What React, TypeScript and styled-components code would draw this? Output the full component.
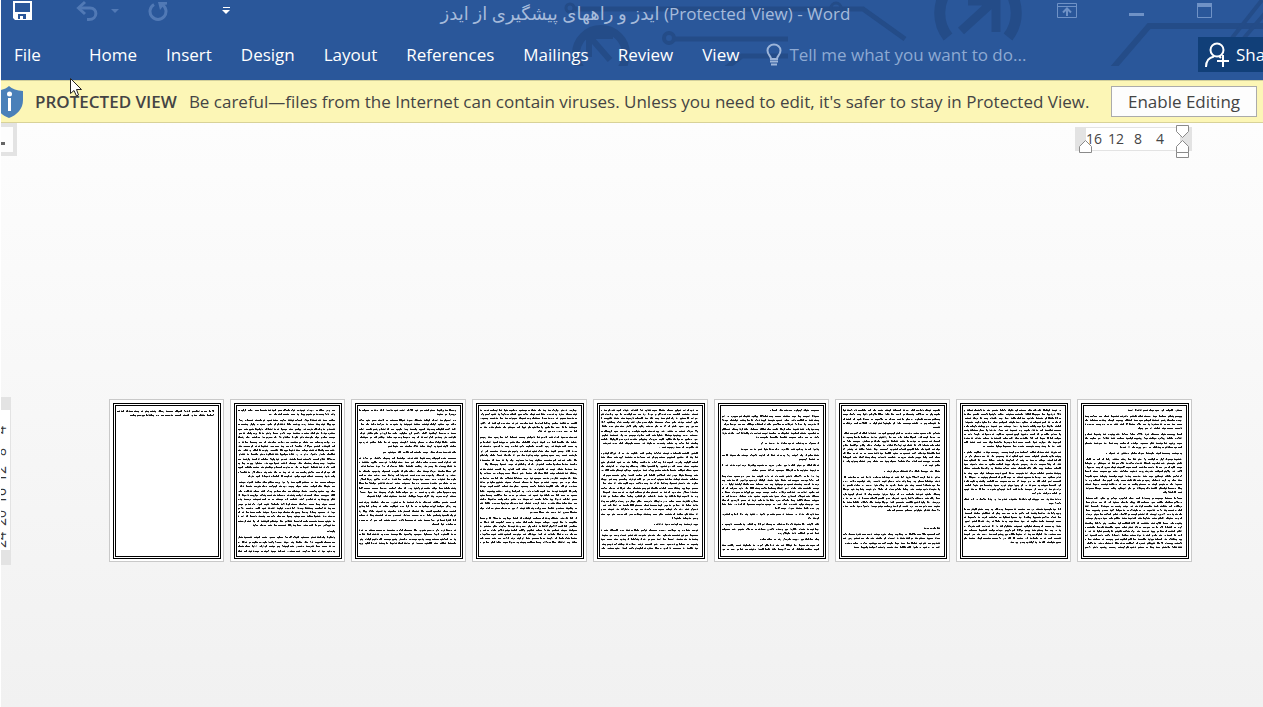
import React from 'react';
import styled, { createGlobalStyle } from 'styled-components';

const GlobalStyle = createGlobalStyle`
  *, *::before, *::after { box-sizing: border-box; }
  body {
    margin: 0;
    background: #fff;
    font-family: "Open Sans", "Noto Sans", "DejaVu Sans", sans-serif;
  }
  button, input { font-family: inherit; }
`;

const Window = styled.div`
  position: relative;
  display: flex;
  flex-direction: column;
  min-height: 100vh;
  padding-left: 1px;
  overflow: hidden;
`;

/* ---------- title bar and ribbon tabs ---------- */

const Header = styled.header`
  position: relative;
  background: #2a579a;
  color: #fff;
  padding-bottom: 8px;
`;

const Circuit = styled.svg`
  position: absolute;
  top: 0;
  right: 0;
  pointer-events: none;
`;

const TitleBar = styled.div`
  position: relative;
  display: grid;
  grid-template-columns: minmax(0, 1fr) auto minmax(0, 1fr);
  height: 37px;
`;

const QuickAccess = styled.div`
  display: grid;
  grid-template-columns: 63px 35px 37px 74px 10px;
  align-items: start;
  padding-left: 12px;
`;

const IconButton = styled.button<{ $dim?: boolean }>`
  display: flex;
  padding: 0;
  border: 0;
  background: none;
  color: ${p => (p.$dim ? '#5179b5' : '#fff')};
`;

const Title = styled.h1`
  margin: 0;
  padding-left: 27px;
  font-size: 17px;
  font-weight: 400;
  line-height: 26px;
  color: #a6bbdb;
  white-space: nowrap;
`;

const DocumentName = styled.span`
  font-size: 18px;
`;

const WindowControls = styled.div`
  display: flex;
  justify-content: flex-end;
  align-items: flex-start;
  gap: 52px;
  padding: 2px 50px 0 0;
`;

const TabRow = styled.nav`
  position: relative;
  display: flex;
  align-items: center;
  height: 35px;
  padding-left: 13px;
`;

const Tabs = styled.div`
  display: flex;
  gap: 29px;
`;

const Tab = styled.a<{ $file?: boolean }>`
  margin-right: ${p => (p.$file ? '19px' : '0')};
  font-size: 17px;
  line-height: 24px;
  color: #fff;
  text-decoration: none;
`;

const TellMe = styled.label`
  display: flex;
  align-items: center;
  flex: 1;
  gap: 7px;
  margin-left: 27px;
  color: #9db5d9;
`;

const TellMeInput = styled.input`
  flex: 1;
  min-width: 0;
  padding: 0;
  border: 0;
  outline: 0;
  background: none;
  color: inherit;
  font-size: 17px;
  line-height: 24px;
  &::placeholder { color: #8eaad3; opacity: 1; }
`;

const ShareButton = styled.button`
  display: flex;
  align-items: center;
  gap: 7px;
  width: 65px;
  height: 35px;
  padding: 0 0 0 7px;
  border: 0;
  background: #113f78;
  color: #fff;
  font-size: 17px;
  overflow: hidden;
  svg { flex: none; }
`;

/* ---------- protected view bar ---------- */

const MessageBar = styled.section`
  display: flex;
  align-items: center;
  height: 43px;
  padding-right: 6px;
  border-top: 1px solid #d2cf9c;
  border-bottom: 1px solid #d8d298;
  background: #fcf6b6;
  color: #444;
  font-size: 17px;
  white-space: nowrap;
`;

const MessageTitle = styled.strong`
  margin: 0 12px;
  font-size: 17px;
  font-weight: 600;
`;

const MessageText = styled.span`
  flex: 1;
`;

const EnableButton = styled.button`
  height: 31px;
  width: 146px;
  padding: 0;
  border: 1px solid #ababab;
  background: #fdfdfd;
  color: #444;
  font-size: 17px;
`;

/* ---------- document area ---------- */

const Workspace = styled.main`
  flex: 1;
  background: linear-gradient(#fdfdfd, #f1f1f1);
`;

const RulerRow = styled.div`
  display: flex;
  justify-content: space-between;
  align-items: flex-start;
  padding-right: 71px;
`;

const TabSelector = styled.button`
  display: flex;
  align-items: center;
  width: 16px;
  height: 33px;
  padding: 8px 0 0;
  border: 4px solid #e3e3e3;
  border-left: 0;
  background: #fdfdfd;
`;

const TabMark = styled.span`
  width: 4px;
  height: 3px;
  background: #666;
`;

const HorizontalRuler = styled.div`
  position: relative;
  display: grid;
  grid-template-columns: repeat(4, 22px);
  width: 117px;
  height: 24px;
  margin-top: 4px;
  padding-left: 8px;
  border: solid #e3e3e3;
  border-width: 1px 0;
  background: linear-gradient(90deg, #e3e3e3 11px, #fff 11px, #fff 105px, #e3e3e3 105px);
  color: #444;
  font-size: 14px;
  line-height: 22px;
  text-align: center;
`;

const Markers = styled.svg`
  position: absolute;
  top: -3px;
  left: 0;
`;

const PageRow = styled.div`
  display: flex;
  justify-content: space-between;
  align-items: flex-start;
  padding: 241px 71px 0 0;
`;

const VerticalRuler = styled.div`
  display: flex;
  flex-direction: column;
  align-items: flex-end;
  width: 10px;
  height: 168px;
  padding: 22px 3px 0 0;
  border-right: 1px solid #e3e3e3;
  background: linear-gradient(#e3e3e3 13px, #fff 13px, #fff 153px, #e3e3e3 153px);
  overflow: hidden;
`;

const VerticalMark = styled.span`
  display: flex;
  justify-content: center;
  height: 22px;
  writing-mode: vertical-rl;
  transform: rotate(180deg);
  color: #333;
  font-size: 14px;
  line-height: 13px;
  text-align: center;
`;

const Pages = styled.div`
  display: flex;
  gap: 6px;
  padding-top: 2px;
`;

const Page = styled.article`
  width: 115px;
  height: 163px;
  padding: 3px 2px 2px 3px;
  border: 1px solid #c9c9c9;
  background: #fff;
`;

const PageFrame = styled.div`
  height: 156px;
  border: 3px double #000;
  svg { display: block; }
`;

const Cursor = styled.svg`
  position: absolute;
  left: 70px;
  top: 78px;
  pointer-events: none;
`;

/* Each paragraph: first baseline, last baseline, line count, width share of the last line. */
type Paragraph = [number, number, number, number];

const PAGES: Paragraph[][] = [
  [[12, 16, 2, 0.88]],
  [[11, 15, 2, 0.68], [21, 77, 14, 0.9], [83, 126, 11, 0.85], [132, 132, 1, 0.08], [138, 152, 4, 1]],
  [[11, 15, 2, 0.2], [21, 47, 7, 0.7], [53, 53, 1, 0.75], [59, 97, 10, 0.92], [103, 125, 6, 0.25], [131, 144, 4, 1]],
  [[11, 32, 6, 0.4], [38, 65, 7, 0.95], [70, 113, 11, 0.5], [119, 143, 7, 1]],
  [[11, 48, 10, 0.4], [54, 119, 16, 0.27], [125, 125, 1, 0.45], [131, 149, 5, 1]],
  [[11, 11, 1, 0.5], [17, 38, 6, 0.65], [44, 44, 1, 0.6], [50, 50, 1, 0.8], [56, 60, 2, 0.22], [66, 71, 2, 0.7],
    [77, 109, 9, 0.45], [115, 119, 2, 0.12], [125, 134, 3, 0.42], [140, 140, 1, 0.62], [146, 150, 2, 1]],
  [[11, 28, 5, 0.08], [34, 66, 9, 0.18], [72, 72, 1, 0.58], [78, 111, 9, 0.55], [129, 129, 1, 0.16], [135, 148, 4, 0.9]],
  [[11, 47, 10, 0.8], [53, 94, 11, 0.3], [100, 104, 2, 0.12], [110, 143, 9, 0.55]],
  [[11, 11, 1, 0.58], [17, 29, 4, 0.45], [35, 48, 4, 0.65], [54, 54, 1, 0.78], [60, 93, 9, 0.2], [99, 148, 13, 1]],
];

const TEXT_WIDTH = 97;

function random(seed: number) {
  let s = seed;
  return () => {
    s = (s + 0x6d2b79f5) | 0;
    let t = Math.imul(s ^ (s >>> 15), 1 | s);
    t = (t + Math.imul(t ^ (t >>> 7), 61 | t)) ^ t;
    return ((t ^ (t >>> 14)) >>> 0) / 4294967296;
  };
}

/* Draws one line of miniature script, word by word from the right edge. */
function scriptLine(y: number, width: number, next: () => number) {
  const left = TEXT_WIDTH - width;
  let x = TEXT_WIDTH;
  let solid = '';
  let soft = '';
  while (x > left) {
    const w = Math.min(2 + Math.floor(next() * 7), x - left);
    x -= w;
    for (let i = 0; i < w; i += 1) {
      const dot = (dy: number) => `M${x + i} ${y + dy}h1v1h-1z`;
      if (next() < 0.88) solid += dot(0);
      else soft += dot(0);
      const r = next();
      if (r < 0.14) solid += dot(-1);
      else if (r < 0.32) soft += dot(-1);
      else if (r < 0.44) soft += dot(1);
    }
    x -= next() < 0.4 ? 1 : 2;
  }
  return { solid, soft };
}

function PageText({ paragraphs, seed }: { paragraphs: Paragraph[]; seed: number }) {
  const next = random(seed * 7919 + 17);
  let solid = '';
  let soft = '';
  paragraphs.forEach(([from, to, count, last]) => {
    for (let i = 0; i < count; i += 1) {
      const y = count > 1 ? Math.round(from + ((to - from) * i) / (count - 1)) : from;
      const width = i === count - 1 ? Math.round(TEXT_WIDTH * last) : TEXT_WIDTH;
      const line = scriptLine(y - 7, width, next);
      solid += line.solid;
      soft += line.soft;
    }
  });
  return (
    <svg width="102" height="150" viewBox="-1 0 102 150" shapeRendering="crispEdges" aria-hidden="true">
      <path d={soft} fill="#a4a4a4" />
      <path d={solid} fill="#161616" />
    </svg>
  );
}

const TABS = ['File', 'Home', 'Insert', 'Design', 'Layout', 'References', 'Mailings', 'Review', 'View'];

export default function App() {
  return (
    <Window>
      <GlobalStyle />
      <Header>
        <Circuit width="723" height="66" viewBox="540 0 723 66" fill="none" stroke="#244c88" aria-hidden="true">
          <circle cx="570" cy="8" r="4" strokeWidth="3" />
          <path d="M575 9H863L905 39" strokeWidth="5" />
          <circle cx="836" cy="8" r="5" strokeWidth="3" />
          <circle cx="601" cy="54" r="25" strokeWidth="8" />
          <path d="M589 57V36H613M590 37L610 60" strokeWidth="6" />
          <circle cx="669" cy="38" r="5" strokeWidth="4" />
          <path d="M675 39H788" strokeWidth="5" />
          <path d="M726 68L742 56H788" strokeWidth="5" />
          <path d="M948 37A39 39 0 0 1 948 -11M1008 37A39 39 0 0 0 1008 -11" strokeWidth="11" />
          <path d="M961 31L995 0M996 32V1H968" strokeWidth="9" />
          <path d="M1113 68L1149 26H1263" strokeWidth="6" />
          <path d="M1232 38L1262 0M1244 38L1266 12" strokeWidth="4" />
        </Circuit>
        <TitleBar>
          <QuickAccess>
            <IconButton aria-label="Save">
              <svg width="20" height="21" viewBox="0 0 20 21">
                <path fillRule="evenodd" fill="currentColor" d="M0 1H19V20H2L0 18ZM2 3V12H17V3ZM5 14V19H7V16H10V19H13V14Z" />
              </svg>
            </IconButton>
            <IconButton $dim aria-label="Undo">
              <svg width="22" height="22" viewBox="0 0 22 22" fill="none" stroke="currentColor" strokeWidth="3">
                <path d="M3 8H14C22 8 22 19.500 13 19.500H11" />
                <path d="M9 2L2.500 8L9 14" />
              </svg>
            </IconButton>
            <IconButton $dim aria-label="Undo history">
              <svg width="8" height="16" viewBox="0 0 8 16"><path fill="currentColor" d="M0 9H8L4 13Z" /></svg>
            </IconButton>
            <IconButton $dim aria-label="Repeat">
              <svg width="20" height="22" viewBox="0 0 20 22">
                <path fill="none" stroke="currentColor" strokeWidth="3" d="M6 4.500A8 8 0 1 0 14 4.500" />
                <path fill="currentColor" d="M10 2H19V4.500L16 5L12 10Z" />
              </svg>
            </IconButton>
            <IconButton aria-label="Customize Quick Access Toolbar">
              <svg width="9" height="16" viewBox="0 0 9 16">
                <path fill="currentColor" d="M1 7H8V8H1ZM0 10H8L4 14Z" />
              </svg>
            </IconButton>
          </QuickAccess>
          <Title>
            <DocumentName lang="fa">ایدز و راههای پیشگیری از ایدز</DocumentName> (Protected View) - Word
          </Title>
          <WindowControls>
            <IconButton $dim aria-label="Ribbon display options">
              <svg width="20" height="17" viewBox="0 0 20 17" fill="none" stroke="#6f92c6">
                <path d="M.5 1.500H19.500V15.500H.5ZM.5 4.500H19.500" />
                <path d="M10 14V7M6 10.500L10 6.500L14 10.500" strokeWidth="2" />
              </svg>
            </IconButton>
            <IconButton $dim aria-label="Minimize">
              <svg width="16" height="17" viewBox="0 0 16 17"><path fill="#6f92c6" d="M0 11H15V14H0Z" /></svg>
            </IconButton>
            <IconButton $dim aria-label="Maximize">
              <svg width="16" height="17" viewBox="0 0 16 17">
                <path fill="none" stroke="#6f92c6" d="M.5 1.500H14.500V15.500H.5Z" />
                <path fill="#6f92c6" d="M0 1H15V5H0Z" />
              </svg>
            </IconButton>
          </WindowControls>
        </TitleBar>
        <TabRow>
          <Tabs>
            {TABS.map(name => (
              <Tab key={name} href="#" $file={name === 'File'}>{name}</Tab>
            ))}
          </Tabs>
          <TellMe>
            <svg width="16" height="24" viewBox="0 0 16 24" fill="none" stroke="currentColor" strokeWidth="2">
              <path d="M5 16C5 12.500 1.500 12 1.500 7.500A6.500 6 0 0 1 14.500 7.500C14.500 12 11 12.500 11 16Z" />
              <path d="M4 18.500H12M5 21.500H11" />
            </svg>
            <TellMeInput aria-label="Tell me what you want to do" placeholder="Tell me what you want to do..." />
          </TellMe>
          <ShareButton>
            <svg width="24" height="26" viewBox="0 0 24 26" fill="none" stroke="currentColor" strokeWidth="2">
              <circle cx="12" cy="8" r="6.500" />
              <path d="M1 25C1 19 4 15.500 9 14.500M14 14L16 16M18 13V25M12 19H24" />
            </svg>
            Share
          </ShareButton>
        </TabRow>
      </Header>

      <MessageBar>
        <svg width="22" height="32" viewBox="1 0 22 32" aria-hidden="true">
          <path fill="#4a80b9" d="M9 0C12 3 17 4.500 23 5V14C23 23 17 29 9 32C1 29 -5 23 -5 14V5C1 4.500 6 3 9 0Z" />
          <circle cx="9.500" cy="8" r="2.500" fill="#fff" />
          <path fill="#fff" d="M8 12H11V25H8Z" />
        </svg>
        <MessageTitle>PROTECTED VIEW</MessageTitle>
        <MessageText>
          Be careful—files from the Internet can contain viruses. Unless you need to edit, it's safer to stay in Protected View.
        </MessageText>
        <EnableButton>Enable Editing</EnableButton>
      </MessageBar>

      <Workspace>
        <RulerRow>
          <TabSelector aria-label="Tab stop type"><TabMark /></TabSelector>
          <HorizontalRuler>
            {[16, 12, 8, 4].map(n => <span key={n}>{n}</span>)}
            <Markers width="117" height="34" viewBox="0 0 117 34" fill="#fff" stroke="#8a8a8a">
              <path d="M4.500 27.500V21.500L10.500 15.500L16.500 21.500V27.500Z" />
              <path d="M101.500 .5H113.500V6.500L107.500 12.500L101.500 6.500Z" />
              <path d="M101.500 27.500V21.500L107.500 15.500L113.500 21.500V27.500Z" />
              <path d="M101.500 27.500H113.500V32.500H101.500Z" />
            </Markers>
          </HorizontalRuler>
        </RulerRow>
        <PageRow>
          <VerticalRuler>
            {[4, 8, 12, 16, 20, 24].map(n => <VerticalMark key={n}>{n}</VerticalMark>)}
          </VerticalRuler>
          <Pages>
            {PAGES.map((paragraphs, i) => (
              <Page key={i} aria-label={`Page ${PAGES.length - i}`}>
                <PageFrame><PageText paragraphs={paragraphs} seed={i + 1} /></PageFrame>
              </Page>
            ))}
          </Pages>
        </PageRow>
      </Workspace>

      <Cursor width="13" height="20" viewBox="0 0 13 20" aria-hidden="true">
        <path fill="#fff" stroke="#222" d="M.5 .5V15.500L4 12.500L6.500 18L8.500 17L6.500 11.500H11.500Z" />
      </Cursor>
    </Window>
  );
}
